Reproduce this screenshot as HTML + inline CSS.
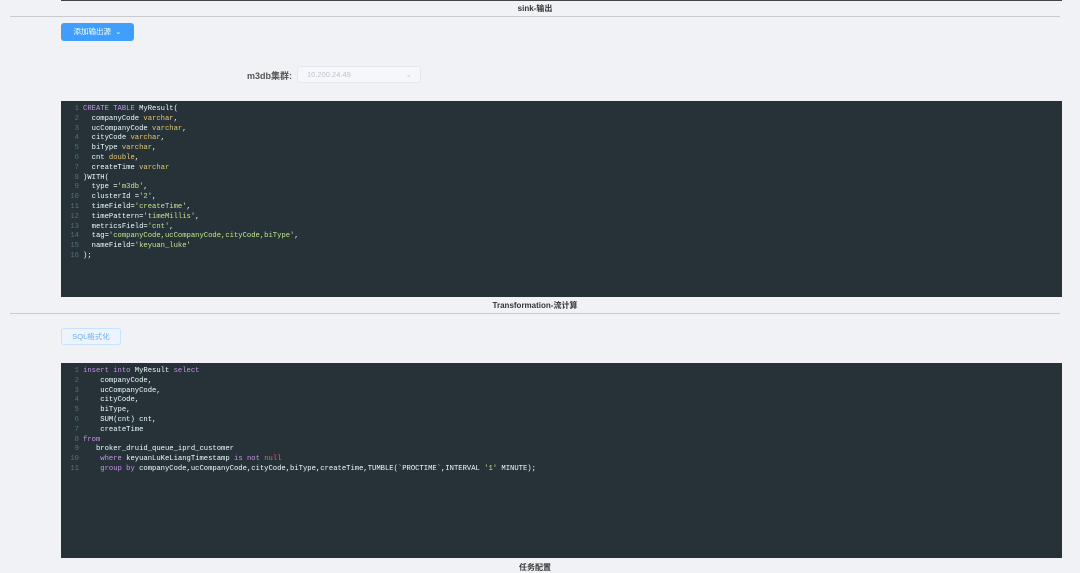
<!DOCTYPE html>
<html><head><meta charset="utf-8"><style>
body{margin:0;width:1080px;height:573px;background:#f0f2f5;position:relative;overflow:hidden;font-family:"Liberation Sans","Noto Sans CJK SC",sans-serif;}
.abs{position:absolute}
.t{font-size:8px;color:#333;font-weight:bold;transform:translateX(-50%)}
.line{height:1px;background:#c8cbd0;left:10px;width:1050px}
.code{left:61px;width:1001px;background:#263238;font-family:"Liberation Mono",monospace;font-size:7.2px;line-height:9.8px;color:#eeffff;padding-top:4px;box-sizing:border-box}
.code div{white-space:pre;position:relative;padding-left:22px}
.code div b{font-weight:normal;position:absolute;left:0;width:18px;text-align:right;color:#546e7a}
.k{color:#c792ea}.y{color:#e6c86e}.s{color:#c3e88d}.r{color:#ff5370}
</style></head><body>
<div class="abs" style="left:61px;top:0;width:1001px;height:1px;background:#444"></div>
<div class="abs t" style="left:535px;top:3px">sink-输出</div>
<div class="abs line" style="top:16px"></div>
<div class="abs" style="left:61px;top:23px;width:73px;height:18px;background:#409eff;border-radius:3px;color:#fff;font-size:7.5px;line-height:18px;text-align:center">添加输出源 &nbsp;⌄</div>
<div class="abs" style="left:247px;top:69px;font-size:9px;font-weight:bold;color:#555">m3db集群:</div>
<div class="abs" style="left:297px;top:66px;width:124px;height:17px;background:#f5f7fa;border:1px solid #e4e7ed;box-sizing:border-box;border-radius:3px;font-size:7.5px;color:#c0c4cc;line-height:15px;padding-left:9px">10.200.24.49<span style="position:absolute;right:8px">⌄</span></div>
<div class="abs code" style="top:101px;height:196px">
<div><b>1</b><span class="k">CREATE TABLE</span> MyResult(</div>
<div><b>2</b>  companyCode <span class="y">varchar</span>,</div>
<div><b>3</b>  ucCompanyCode <span class="y">varchar</span>,</div>
<div><b>4</b>  cityCode <span class="y">varchar</span>,</div>
<div><b>5</b>  biType <span class="y">varchar</span>,</div>
<div><b>6</b>  cnt <span class="y">double</span>,</div>
<div><b>7</b>  createTime <span class="y">varchar</span></div>
<div><b>8</b>)WITH(</div>
<div><b>9</b>  type =<span class="s">'m3db'</span>,</div>
<div><b>10</b>  clusterId =<span class="s">'2'</span>,</div>
<div><b>11</b>  timeField=<span class="s">'createTime'</span>,</div>
<div><b>12</b>  timePattern=<span class="s">'timeMillis'</span>,</div>
<div><b>13</b>  metricsField=<span class="s">'cnt'</span>,</div>
<div><b>14</b>  tag=<span class="s">'companyCode,ucCompanyCode,cityCode,biType'</span>,</div>
<div><b>15</b>  nameField=<span class="s">'keyuan_luke'</span></div>
<div><b>16</b>);</div>
</div>
<div class="abs t" style="left:535px;top:300px">Transformation-流计算</div>
<div class="abs line" style="top:313px"></div>
<div class="abs" style="left:61px;top:328px;width:60px;height:17px;background:#ecf5ff;border:1px solid #c6e2ff;box-sizing:border-box;border-radius:3px;color:#6aaeff;font-size:7.5px;line-height:15px;text-align:center">SQL格式化</div>
<div class="abs code" style="top:363px;height:195px">
<div><b>1</b><span class="k">insert into</span> MyResult <span class="k">select</span></div>
<div><b>2</b>    companyCode,</div>
<div><b>3</b>    ucCompanyCode,</div>
<div><b>4</b>    cityCode,</div>
<div><b>5</b>    biType,</div>
<div><b>6</b>    SUM(cnt) cnt,</div>
<div><b>7</b>    createTime</div>
<div><b>8</b><span class="k">from</span></div>
<div><b>9</b>   broker_druid_queue_iprd_customer</div>
<div><b>10</b>    <span class="k">where</span> keyuanLuKeLiangTimestamp <span class="k">is not</span> <span class="r">null</span></div>
<div><b>11</b>    <span class="k">group by</span> companyCode,ucCompanyCode,cityCode,biType,createTime,TUMBLE(`PROCTIME`,INTERVAL <span class="s">'1'</span> MINUTE);</div>
</div>
<div class="abs t" style="left:535px;top:562px">任务配置</div>
</body></html>
